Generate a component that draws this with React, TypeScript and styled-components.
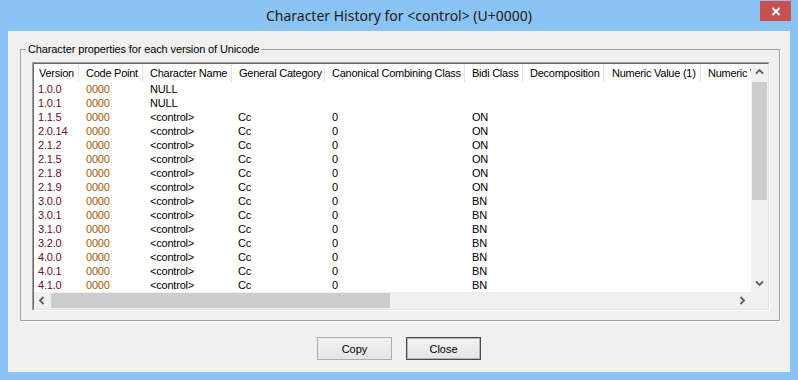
import React from "react";
import styled, { createGlobalStyle } from "styled-components";

const GlobalStyle = createGlobalStyle`
  html, body { margin: 0; padding: 0; }
  body {
    background: #8ac4f4;
    font-family: "Liberation Sans", Arial, sans-serif;
    -webkit-font-smoothing: antialiased;
  }
`;

const COLS = "45px 64px 89px 93px 140px 58px 81px 97px 97px";

const Window = styled.div`
  width: 798px;
  height: 380px;
  display: flex;
  flex-direction: column;
  background: #8ac4f4;
  overflow: hidden;
`;

const TitleBar = styled.div`
  height: 31px;
  flex: none;
  display: grid;
  grid-template-columns: 1fr auto 1fr;
  align-items: start;
`;

const Title = styled.div`
  grid-column: 2;
  font-family: "Noto Sans", "Open Sans", sans-serif;
  font-size: 14px;
  line-height: 31px;
  color: #1a1a1a;
  white-space: nowrap;
`;

const CloseButton = styled.button`
  grid-column: 3;
  justify-self: end;
  margin: 1px 7px 0 0;
  width: 31px;
  height: 20px;
  padding: 0;
  border: 0;
  background: #c75050;
  display: flex;
  align-items: center;
  justify-content: center;
`;

const Client = styled.div`
  flex: 1;
  margin: 0 8px 8px;
  background: #f0f0f0;
  display: flex;
  flex-direction: column;
  padding: 12px 10px 0 12px;
  font-size: 11px;
  color: #000;
`;

const Group = styled.fieldset`
  margin: 0;
  padding: 6px 9px 9px 11px;
  border: 1px solid #a0a0a0;
  box-shadow: 1px 1px 0 #ffffff;
  min-width: 0;
`;

const Legend = styled.legend`
  font-size: 11px;
  line-height: 13px;
  padding: 0 2px;
  margin-left: -6px;
  letter-spacing: -0.12px;
`;

const ListView = styled.div`
  height: 249px;
  box-sizing: border-box;
  border: 1px solid;
  border-color: #a0a0a0 #ffffff #ffffff #a0a0a0;
  display: flex;
`;

const ListPane = styled.div`
  flex: 1;
  min-width: 0;
  border: 1px solid;
  border-color: #696969 #e3e3e3 #e3e3e3 #696969;
  display: grid;
  grid-template-columns: 1fr 17px;
  grid-template-rows: 1fr 17px;
  background: #ffffff;
`;

const Viewport = styled.div`
  grid-column: 1;
  grid-row: 1;
  overflow: hidden;
  background: #ffffff;
`;

const HeaderRow = styled.div`
  display: grid;
  grid-template-columns: ${COLS};
  width: max-content;
  height: 18px;
`;

const HeaderCell = styled.div<{ $pad: number }>`
  box-sizing: border-box;
  padding-left: ${(p) => p.$pad}px;
  border-right: 1px solid #e5e5e5;
  line-height: 18px;
  white-space: nowrap;
  overflow: hidden;
  letter-spacing: -0.25px;
`;

const Row = styled.div`
  display: grid;
  grid-template-columns: ${COLS};
  width: max-content;
  height: 14px;
`;

const Cell = styled.div<{ $pad: number; $color?: string }>`
  padding-left: ${(p) => p.$pad}px;
  line-height: 14px;
  white-space: nowrap;
  overflow: hidden;
  color: ${(p) => p.$color || "#000"};
  letter-spacing: -0.2px;
`;

const VScroll = styled.div`
  grid-column: 2;
  grid-row: 1;
  background: #f0f0f0;
  display: flex;
  flex-direction: column;
`;

const HScroll = styled.div`
  grid-column: 1;
  grid-row: 2;
  background: #f0f0f0;
  display: flex;
`;

const Corner = styled.div`
  grid-column: 2;
  grid-row: 2;
  background: #f0f0f0;
`;

const ArrowBox = styled.div`
  width: 17px;
  height: 17px;
  flex: none;
  display: flex;
  align-items: center;
  justify-content: center;
`;

const VTrack = styled.div`
  flex: 1;
  display: flex;
  flex-direction: column;
  padding: 1px 1px 0;
`;

const HTrack = styled.div`
  flex: 1;
  display: flex;
  padding: 1px 0 1px;
`;

const VThumb = styled.div`
  height: 118px;
  background: #cdcdcd;
`;

const HThumb = styled.div`
  width: 339px;
  background: #cdcdcd;
`;

const ButtonRow = styled.div`
  display: flex;
  justify-content: center;
  gap: 14px;
  margin-top: 16px;
  margin-right: 2px;
`;

const Button = styled.button<{ $default?: boolean }>`
  width: 75px;
  height: 23px;
  box-sizing: border-box;
  padding: 0;
  font-family: "Liberation Sans", Arial, sans-serif;
  font-size: 11px;
  color: #000;
  background: linear-gradient(#f2f2f2, #e5e5e5);
  border: 1px solid ${(p) => (p.$default ? "#4a4a4a" : "#acacac")};
  box-shadow: ${(p) => (p.$default ? "inset 0 0 0 1px #b5b5b5" : "none")};
`;

const Arrow = ({ dir }: { dir: "up" | "down" | "left" | "right" }) => {
  const paths: Record<string, string> = {
    up: "M1 5.5 L4.5 2 L8 5.5",
    down: "M1 2.5 L4.5 6 L8 2.5",
    left: "M5.5 1 L2 4.5 L5.5 8",
    right: "M2.5 1 L6 4.5 L2.5 8",
  };
  return (
    <svg width="9" height="9" viewBox="0 0 9 9">
      <path d={paths[dir]} fill="none" stroke="#606060" strokeWidth="1.8" />
    </svg>
  );
};

const headers: { label: string; pad: number }[] = [
  { label: "Version", pad: 5 },
  { label: "Code Point", pad: 7 },
  { label: "Character Name", pad: 7 },
  { label: "General Category", pad: 7 },
  { label: "Canonical Combining Class", pad: 7 },
  { label: "Bidi Class", pad: 7 },
  { label: "Decomposition", pad: 7 },
  { label: "Numeric Value (1)", pad: 8 },
  { label: "Numeric Value (2)", pad: 7 },
];

type Rec = { v: string; name: string; cat: string; ccc: string; bidi: string };

const rows: Rec[] = [
  { v: "1.0.0", name: "NULL", cat: "", ccc: "", bidi: "" },
  { v: "1.0.1", name: "NULL", cat: "", ccc: "", bidi: "" },
  { v: "1.1.5", name: "<control>", cat: "Cc", ccc: "0", bidi: "ON" },
  { v: "2.0.14", name: "<control>", cat: "Cc", ccc: "0", bidi: "ON" },
  { v: "2.1.2", name: "<control>", cat: "Cc", ccc: "0", bidi: "ON" },
  { v: "2.1.5", name: "<control>", cat: "Cc", ccc: "0", bidi: "ON" },
  { v: "2.1.8", name: "<control>", cat: "Cc", ccc: "0", bidi: "ON" },
  { v: "2.1.9", name: "<control>", cat: "Cc", ccc: "0", bidi: "ON" },
  { v: "3.0.0", name: "<control>", cat: "Cc", ccc: "0", bidi: "BN" },
  { v: "3.0.1", name: "<control>", cat: "Cc", ccc: "0", bidi: "BN" },
  { v: "3.1.0", name: "<control>", cat: "Cc", ccc: "0", bidi: "BN" },
  { v: "3.2.0", name: "<control>", cat: "Cc", ccc: "0", bidi: "BN" },
  { v: "4.0.0", name: "<control>", cat: "Cc", ccc: "0", bidi: "BN" },
  { v: "4.0.1", name: "<control>", cat: "Cc", ccc: "0", bidi: "BN" },
  { v: "4.1.0", name: "<control>", cat: "Cc", ccc: "0", bidi: "BN" },
];

export default function App() {
  return (
    <>
      <GlobalStyle />
      <Window>
        <TitleBar>
          <Title>Character History for &lt;control&gt; (U+0000)</Title>
          <CloseButton aria-label="Close">
            <svg width="10" height="9" viewBox="0 0 10 9">
              <path d="M1.5 1 L8.5 8 M8.5 1 L1.5 8" stroke="#fff" strokeWidth="2" />
            </svg>
          </CloseButton>
        </TitleBar>
        <Client>
          <Group>
            <Legend>Character properties for each version of Unicode</Legend>
            <ListView>
              <ListPane>
                <Viewport>
                  <HeaderRow>
                    {headers.map((h) => (
                      <HeaderCell key={h.label} $pad={h.pad}>
                        {h.label}
                      </HeaderCell>
                    ))}
                  </HeaderRow>
                  {rows.map((r) => (
                    <Row key={r.v}>
                      <Cell $pad={4} $color="#6a0e2a">{r.v}</Cell>
                      <Cell $pad={7} $color="#a65a0a">0000</Cell>
                      <Cell $pad={7}>{r.name}</Cell>
                      <Cell $pad={6}>{r.cat}</Cell>
                      <Cell $pad={7}>{r.ccc}</Cell>
                      <Cell $pad={7}>{r.bidi}</Cell>
                      <Cell $pad={7} />
                      <Cell $pad={7} />
                      <Cell $pad={7} />
                    </Row>
                  ))}
                </Viewport>
                <VScroll>
                  <ArrowBox><Arrow dir="up" /></ArrowBox>
                  <VTrack><VThumb /></VTrack>
                  <ArrowBox><Arrow dir="down" /></ArrowBox>
                </VScroll>
                <HScroll>
                  <ArrowBox><Arrow dir="left" /></ArrowBox>
                  <HTrack><HThumb /></HTrack>
                  <ArrowBox><Arrow dir="right" /></ArrowBox>
                </HScroll>
                <Corner />
              </ListPane>
            </ListView>
          </Group>
          <ButtonRow>
            <Button>Copy</Button>
            <Button $default>Close</Button>
          </ButtonRow>
        </Client>
      </Window>
    </>
  );
}
